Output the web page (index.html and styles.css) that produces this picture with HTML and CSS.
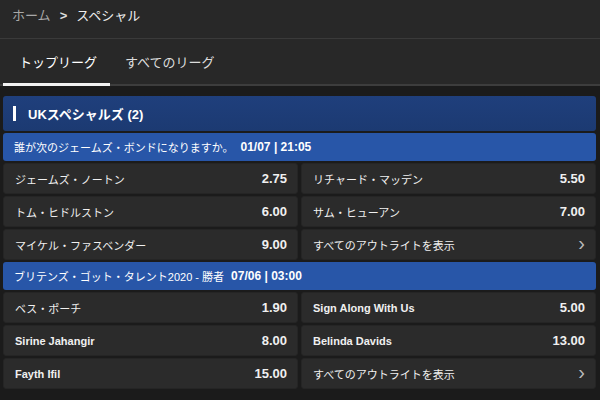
FILE: index.html
```html
<!DOCTYPE html>
<html lang="ja">
<head>
    <meta charset="UTF-8">
    <title>スペシャル</title>
    <link rel="stylesheet" href="styles.css">
</head>
<body>
    <div class="top">
        <div class="crumbs">
            <span class="crumb-home">ホーム</span>
            <span class="crumb-sep">&gt;</span>
            <span class="crumb-now">スペシャル</span>
        </div>
        <div class="tabs">
            <div class="tab active">トップリーグ</div>
            <div class="tab">すべてのリーグ</div>
        </div>
    </div>

    <div class="content">
        <div class="section-head"><span class="bar"></span>UKスペシャルズ (2)</div>

        <div class="event-head">誰が次のジェームズ・ボンドになりますか。 <b>01/07 | 21:05</b></div>
        <div class="grid">
            <div class="cell"><span>ジェームズ・ノートン</span><b>2.75</b></div>
            <div class="cell"><span>リチャード・マッデン</span><b>5.50</b></div>
            <div class="cell"><span>トム・ヒドルストン</span><b>6.00</b></div>
            <div class="cell"><span>サム・ヒューアン</span><b>7.00</b></div>
            <div class="cell"><span>マイケル・ファスベンダー</span><b>9.00</b></div>
            <div class="cell"><span>すべてのアウトライトを表示</span><i class="chev">›</i></div>
        </div>

        <div class="event-head">ブリテンズ・ゴット・タレント2020 - 勝者 <b>07/06 | 03:00</b></div>
        <div class="grid">
            <div class="cell"><span>ベス・ポーチ</span><b>1.90</b></div>
            <div class="cell"><span class="en">Sign Along With Us</span><b>5.00</b></div>
            <div class="cell"><span class="en">Sirine Jahangir</span><b>8.00</b></div>
            <div class="cell"><span class="en">Belinda Davids</span><b>13.00</b></div>
            <div class="cell"><span class="en">Fayth Ifil</span><b>15.00</b></div>
            <div class="cell"><span>すべてのアウトライトを表示</span><i class="chev">›</i></div>
        </div>
    </div>
</body>
</html>
```

FILE: styles.css
```css
/* 全体 */
body {
    margin: 0;
    background-color: #1b1b1b;
    color: #fff;
    font-family: "Liberation Sans", "Noto Sans CJK JP", sans-serif;
    font-size: 11px;
}

/* ヘッダー */
.top {
    background-color: #282828;
    border-bottom: 2px solid #3d3d3d;
}

.crumbs {
    height: 39px;
    box-sizing: border-box;
    display: flex;
    align-items: flex-start;
    padding: 7px 0 0 12px;
    line-height: 18px;
    font-size: 13px;
    border-bottom: 1px solid #3a3a3a;
}

.crumb-home {
    color: #a8a8a8;
}

.crumb-sep {
    color: #ddd;
    margin: 0 9px;
    font-weight: bold;
}

.crumb-now {
    color: #eee;
}

.tabs {
    display: flex;
    height: 45px;
}

.tab {
    display: flex;
    align-items: center;
    padding: 0 15px;
    font-size: 13px;
    color: #ddd;
    white-space: nowrap;
    margin-bottom: -2px;
    border-bottom: 3px solid transparent;
}

.tab.active {
    color: #fff;
    box-sizing: border-box;
    width: 107px;
    padding-left: 16px;
    margin-left: 3px;
    border-bottom-color: #f2f2f2;
}

/* コンテンツ */
.content {
    padding: 10px 4px 0 3px;
}

.section-head {
    height: 35px;
    display: flex;
    align-items: center;
    background: linear-gradient(#1f3f7c, #1c3a72);
    border-radius: 3px;
    font-size: 13px;
    font-weight: bold;
    padding-left: 10px;
    margin-bottom: 2px;
}

.bar {
    width: 3px;
    height: 15px;
    background-color: #fff;
    margin-right: 12px;
}

.event-head {
    height: 28px;
    display: flex;
    align-items: center;
    background-color: #2856a8;
    border-radius: 3px;
    padding-left: 11px;
    margin-bottom: 2px;
    white-space: pre;
}

.event-head b {
    margin-left: 4px;
    font-size: 12px;
}

.grid {
    display: grid;
    grid-template-columns: 1fr 1fr;
    column-gap: 3px;
    row-gap: 2px;
    margin-bottom: 2px;
}

.cell {
    height: 31px;
    box-sizing: border-box;
    display: flex;
    align-items: center;
    justify-content: space-between;
    padding: 0 10px 0 11px;
    background-color: #2b2b2b;
    border: 1px solid #252525;
    border-radius: 3px;
    color: #f0f0f0;
}

.cell b {
    font-size: 13px;
}

.cell .en {
    font-weight: bold;
}

.chev {
    font-style: normal;
    font-size: 20px;
    color: #bbb;
    line-height: 1;
    margin-top: -3px;
}
```
